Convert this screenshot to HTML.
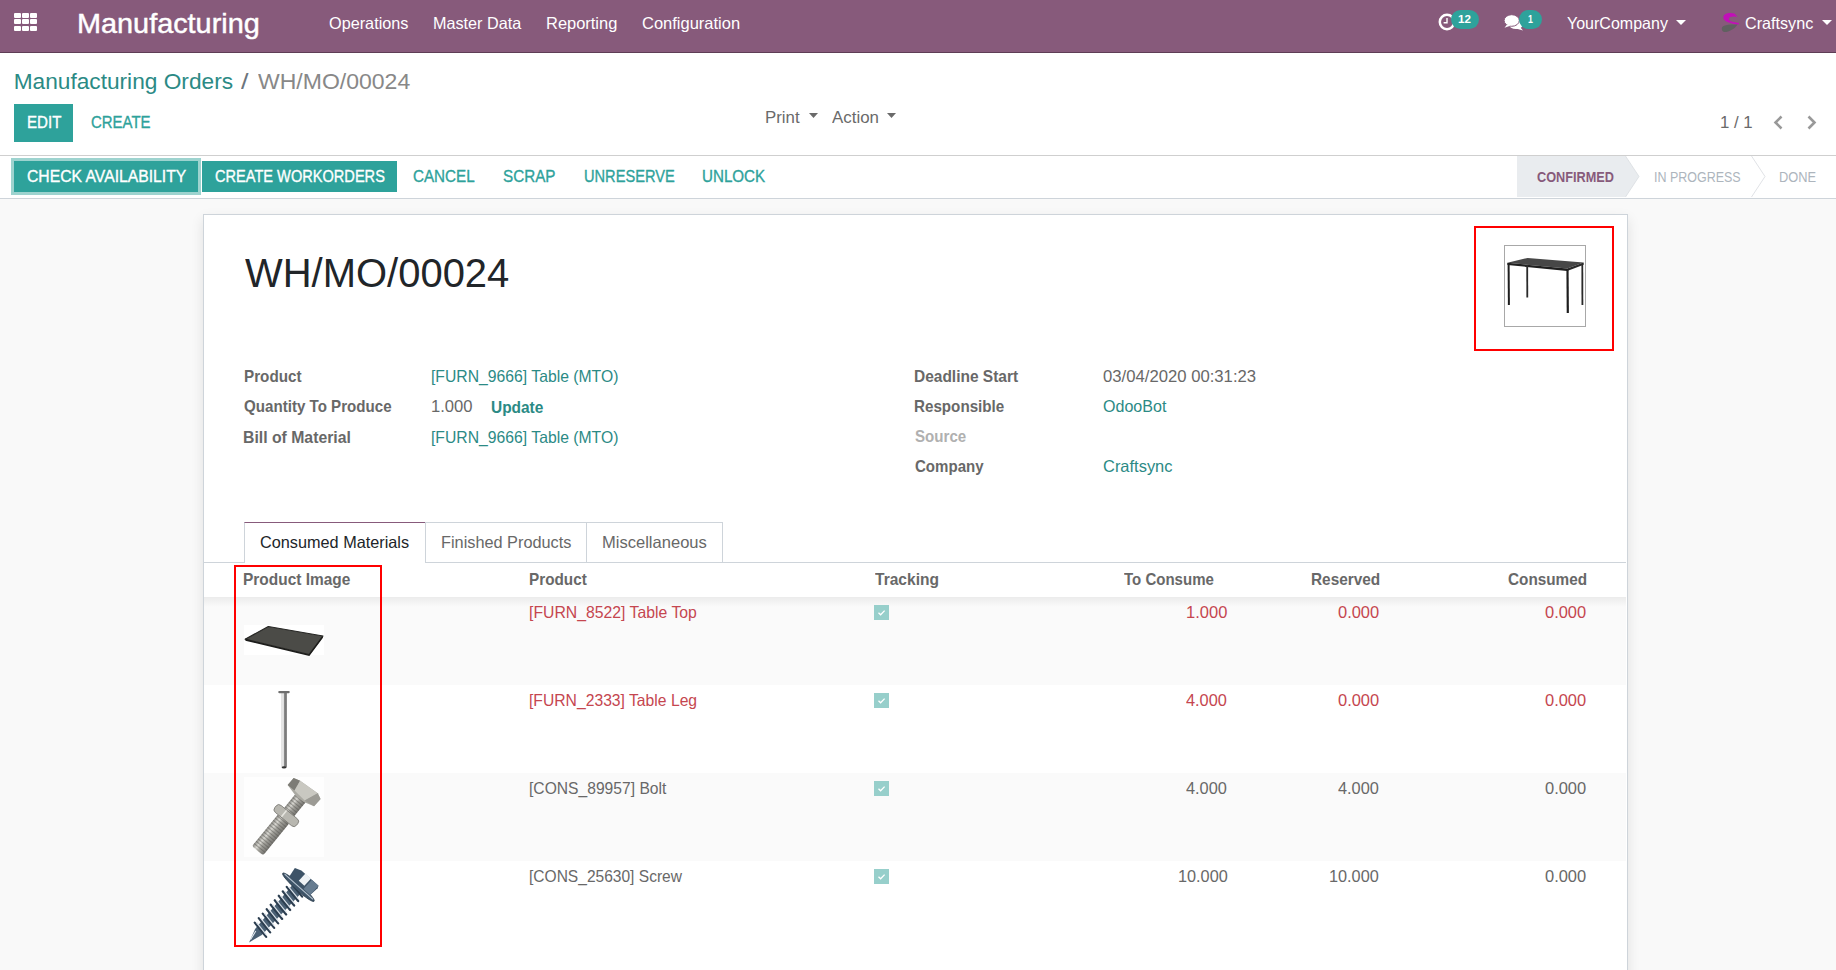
<!DOCTYPE html>
<html><head><meta charset="utf-8"><style>
html,body{margin:0;padding:0;}
body{width:1836px;height:970px;overflow:hidden;position:relative;background:#f9f9f9;font-family:"Liberation Sans",sans-serif;}
.t{position:absolute;white-space:nowrap;transform-origin:0 0;}
</style></head><body>
<div style="position:absolute;left:0px;top:0px;width:1836px;height:52px;background:#875a7b;"></div>
<div style="position:absolute;left:0px;top:52px;width:1836px;height:1px;background:#5e3d55;"></div>
<div style="position:absolute;left:14.0px;top:12.8px;width:6.6px;height:5px;background:#fff;border-radius:1px;"></div>
<div style="position:absolute;left:22.2px;top:12.8px;width:6.6px;height:5px;background:#fff;border-radius:1px;"></div>
<div style="position:absolute;left:30.4px;top:12.8px;width:6.6px;height:5px;background:#fff;border-radius:1px;"></div>
<div style="position:absolute;left:14.0px;top:19.450000000000003px;width:6.6px;height:5px;background:#fff;border-radius:1px;"></div>
<div style="position:absolute;left:22.2px;top:19.450000000000003px;width:6.6px;height:5px;background:#fff;border-radius:1px;"></div>
<div style="position:absolute;left:30.4px;top:19.450000000000003px;width:6.6px;height:5px;background:#fff;border-radius:1px;"></div>
<div style="position:absolute;left:14.0px;top:26.1px;width:6.6px;height:5px;background:#fff;border-radius:1px;"></div>
<div style="position:absolute;left:22.2px;top:26.1px;width:6.6px;height:5px;background:#fff;border-radius:1px;"></div>
<div style="position:absolute;left:30.4px;top:26.1px;width:6.6px;height:5px;background:#fff;border-radius:1px;"></div>
<div class="t" style="left:77.12px;top:5.79px;font-size:28px;line-height:35px;color:#fff;transform:scaleX(1.0299);-webkit-text-stroke:0.45px #fff;">Manufacturing</div>
<div class="t" style="left:329.13px;top:12.78px;font-size:16.5px;line-height:21px;color:#fff;transform:scaleX(0.9841);">Operations</div>
<div class="t" style="left:433.16px;top:12.78px;font-size:16.5px;line-height:21px;color:#fff;transform:scaleX(0.9817);">Master Data</div>
<div class="t" style="left:546.44px;top:12.78px;font-size:16.5px;line-height:21px;color:#fff;transform:scaleX(0.9966);">Reporting</div>
<div class="t" style="left:641.98px;top:12.78px;font-size:16.5px;line-height:21px;color:#fff;">Configuration</div>
<svg style="position:absolute;left:1436px;top:12px" width="22" height="22" viewBox="0 0 22 22"><circle cx="11" cy="10" r="7.2" fill="none" stroke="#fff" stroke-width="2.5"/><path d="M11 6 V10.8 H7.6" fill="none" stroke="#fff" stroke-width="1.4"/></svg>
<div style="position:absolute;left:1450.5px;top:10px;width:28.5px;height:19px;background:#2ea29b;border-radius:9.5px;"></div>
<div class="t" style="left:1458.28px;top:12.41px;font-size:11.8px;line-height:15px;color:#fff;font-weight:700;transform:scaleX(0.9817);">12</div>
<svg style="position:absolute;left:1502px;top:13px" width="24" height="20" viewBox="0 0 24 20"><ellipse cx="14" cy="11.5" rx="7" ry="4.6" fill="#fff"/><path d="M18 14 L21 17.5 L14 15.5 Z" fill="#fff"/><ellipse cx="9.7" cy="7.5" rx="7.6" ry="5.8" fill="#fff" stroke="#875a7b" stroke-width="1"/><path d="M5 11.5 L2.5 14.8 L9 12.5 Z" fill="#fff"/></svg>
<div style="position:absolute;left:1519.2px;top:10px;width:22.8px;height:19px;background:#2ea29b;border-radius:9.5px;"></div>
<div class="t" style="left:1527.65px;top:12.41px;font-size:11.8px;line-height:15px;color:#fff;font-weight:700;transform:scaleX(0.7472);">1</div>
<div class="t" style="left:1567.14px;top:12.78px;font-size:16.5px;line-height:21px;color:#fff;transform:scaleX(0.9707);">YourCompany</div>
<svg style="position:absolute;left:1676px;top:20px" width="10" height="5" viewBox="0 0 10 5"><path d="M0 0H10L5 5Z" fill="#fff"/></svg>
<svg style="position:absolute;left:1720px;top:12px" width="20" height="21" viewBox="0 0 20 21"><path d="M14.5 1.5 C10 0.2 4 0.8 3.3 5 C2.8 8.5 8 10.5 12 11.5 C14.5 12.2 16.5 12.6 18.8 12.4 L18.8 10.8 C15 10.5 8.5 9.5 8.8 7 C9 4.5 13.5 4.2 17.5 5 Z" fill="#c20fb8"/><path d="M17.5 12.5 C14 12.5 7 12.2 3.5 14 C1 15.3 1.2 19 4 20 C8 20.5 15 17 17.5 12.5 Z" fill="#606060"/></svg>
<div class="t" style="left:1744.59px;top:12.78px;font-size:16.5px;line-height:21px;color:#fff;transform:scaleX(0.9796);">Craftsync</div>
<svg style="position:absolute;left:1821.5px;top:20px" width="10" height="5" viewBox="0 0 10 5"><path d="M0 0H10L5 5Z" fill="#fff"/></svg>
<div style="position:absolute;left:0px;top:53px;width:1836px;height:102px;background:#fff;"></div>
<div class="t" style="left:13.63px;top:67.13px;font-size:22.7px;line-height:28px;color:#2b8a85;">Manufacturing Orders</div>
<div class="t" style="left:240.50px;top:67.13px;font-size:22.7px;line-height:28px;color:#6c757d;transform:scaleX(1.1906);">/</div>
<div class="t" style="left:258.38px;top:67.13px;font-size:22.7px;line-height:28px;color:#888;transform:scaleX(1.0143);">WH/MO/00024</div>
<div style="position:absolute;left:14px;top:104px;width:59px;height:38px;background:#2ea29b;"></div>
<div class="t" style="left:26.85px;top:111.78px;font-size:16.5px;line-height:21px;color:#fff;transform:scaleX(0.9150);-webkit-text-stroke:0.35px currentColor;">EDIT</div>
<div class="t" style="left:90.75px;top:111.78px;font-size:16.5px;line-height:21px;color:#2ea29b;transform:scaleX(0.9052);-webkit-text-stroke:0.35px currentColor;">CREATE</div>
<div class="t" style="left:764.51px;top:107.28px;font-size:16.5px;line-height:21px;color:#6a6a6a;transform:scaleX(1.0209);">Print</div>
<svg style="position:absolute;left:808.5px;top:113px" width="9" height="5" viewBox="0 0 9 5"><path d="M0 0H9L4.5 5Z" fill="#6a6a6a"/></svg>
<div class="t" style="left:831.96px;top:107.28px;font-size:16.5px;line-height:21px;color:#6a6a6a;transform:scaleX(1.0233);">Action</div>
<svg style="position:absolute;left:886.5px;top:113px" width="9" height="5" viewBox="0 0 9 5"><path d="M0 0H9L4.5 5Z" fill="#6a6a6a"/></svg>
<div class="t" style="left:1719.74px;top:112.18px;font-size:16.5px;line-height:21px;color:#6a6a6a;transform:scaleX(1.0176);">1 / 1</div>
<svg style="position:absolute;left:1772px;top:115px" width="12" height="15" viewBox="0 0 12 15"><path d="M9.5 1.5 L3.5 7.5 L9.5 13.5" fill="none" stroke="#999" stroke-width="2.6"/></svg>
<svg style="position:absolute;left:1806px;top:115px" width="12" height="15" viewBox="0 0 12 15"><path d="M2.5 1.5 L8.5 7.5 L2.5 13.5" fill="none" stroke="#999" stroke-width="2.6"/></svg>
<div style="position:absolute;left:0px;top:155px;width:1836px;height:1px;background:#cfcfcf;"></div>
<div style="position:absolute;left:0px;top:156px;width:1836px;height:42px;background:#fff;"></div>
<div style="position:absolute;left:0px;top:198px;width:1836px;height:1px;background:#ced4da;"></div>
<div style="position:absolute;left:11px;top:158px;width:190px;height:37px;background:#9dd3cf;"></div>
<div style="position:absolute;left:14px;top:161px;width:184px;height:31px;background:#2ea29b;"></div>
<div class="t" style="left:26.51px;top:165.98px;font-size:16.5px;line-height:21px;color:#fff;transform:scaleX(0.9528);-webkit-text-stroke:0.35px currentColor;">CHECK AVAILABILITY</div>
<div style="position:absolute;left:202px;top:161px;width:195px;height:31px;background:#2ea29b;"></div>
<div class="t" style="left:214.77px;top:165.98px;font-size:16.5px;line-height:21px;color:#fff;transform:scaleX(0.8838);-webkit-text-stroke:0.35px currentColor;">CREATE WORKORDERS</div>
<div class="t" style="left:413.14px;top:165.78px;font-size:16.5px;line-height:21px;color:#2ea29b;transform:scaleX(0.9215);-webkit-text-stroke:0.35px currentColor;">CANCEL</div>
<div class="t" style="left:503.31px;top:165.78px;font-size:16.5px;line-height:21px;color:#2ea29b;transform:scaleX(0.9233);-webkit-text-stroke:0.35px currentColor;">SCRAP</div>
<div class="t" style="left:583.67px;top:165.78px;font-size:16.5px;line-height:21px;color:#2ea29b;transform:scaleX(0.8854);-webkit-text-stroke:0.35px currentColor;">UNRESERVE</div>
<div class="t" style="left:702.33px;top:165.78px;font-size:16.5px;line-height:21px;color:#2ea29b;transform:scaleX(0.9186);-webkit-text-stroke:0.35px currentColor;">UNLOCK</div>
<svg style="position:absolute;left:1500px;top:156px" width="336" height="42" viewBox="0 0 336 42"><path d="M17 0 H125.5 L139 20.5 L125.5 41 H17 Z" fill="#e9ecef"/><path d="M125.5 0 L139 20.5 L125.5 41" fill="none" stroke="#d9dde1" stroke-width="0.8"/><path d="M251.5 0 L265 20.5 L251.5 41" fill="none" stroke="#dcdfe3" stroke-width="0.9"/></svg>
<div class="t" style="left:1536.59px;top:167.00px;font-size:15px;line-height:19px;color:#875a7b;font-weight:700;transform:scaleX(0.8472);">CONFIRMED</div>
<div class="t" style="left:1653.65px;top:167.00px;font-size:15px;line-height:19px;color:#adb5bd;transform:scaleX(0.8311);">IN PROGRESS</div>
<div class="t" style="left:1779.44px;top:167.00px;font-size:15px;line-height:19px;color:#adb5bd;transform:scaleX(0.8559);">DONE</div>
<div style="position:absolute;left:203px;top:214px;width:1425px;height:800px;background:#fff;border:1px solid #ced4da;box-sizing:border-box;box-shadow:0 5px 12px rgba(0,0,0,0.1);"></div>
<div class="t" style="left:245.10px;top:248.40px;font-size:39.8px;line-height:50px;color:#212529;transform:scaleX(1.0043);">WH/MO/00024</div>
<div style="position:absolute;left:1474px;top:226px;width:140px;height:125px;border:2px solid #ff0000;box-sizing:border-box;"></div>
<div style="position:absolute;left:1504px;top:245px;width:82px;height:82px;border:1px solid #a8a8a8;box-sizing:border-box;background:#fff;"></div>
<svg style="position:absolute;left:1505px;top:246px" width="80" height="80" viewBox="0 0 80 80"><path d="M2.4 16.8 L22.6 11.9 L78.7 16.5 L62.2 22.6 Z" fill="#474747"/><path d="M2.4 16.8 L62.2 22.6 L62.2 25 L2.4 19 Z" fill="#1f1f1f"/><path d="M62.2 22.6 L78.7 16.5 L78.7 18.8 L62.2 25 Z" fill="#2a2a2a"/><path d="M3.6 17 L3.9 58.9" stroke="#1e1e1e" stroke-width="2"/><path d="M22.2 19 L22.3 51.5" stroke="#2a2a2a" stroke-width="1.8"/><path d="M62.5 23 L62.8 67.1" stroke="#1e1e1e" stroke-width="2.2"/><path d="M77.3 17.5 L77.4 58.9" stroke="#2a2a2a" stroke-width="1.8"/></svg>
<div class="t" style="left:243.67px;top:365.98px;font-size:16.5px;line-height:21px;color:#686868;font-weight:700;transform:scaleX(0.9228);">Product</div>
<div class="t" style="left:243.90px;top:396.28px;font-size:16.5px;line-height:21px;color:#686868;font-weight:700;transform:scaleX(0.9165);">Quantity To Produce</div>
<div class="t" style="left:243.43px;top:426.58px;font-size:16.5px;line-height:21px;color:#686868;font-weight:700;transform:scaleX(0.9565);">Bill of Material</div>
<div class="t" style="left:431.20px;top:365.98px;font-size:16.5px;line-height:21px;color:#2b8a85;transform:scaleX(0.9536);">[FURN_9666] Table (MTO)</div>
<div class="t" style="left:431.05px;top:396.28px;font-size:16.5px;line-height:21px;color:#686868;transform:scaleX(1.0067);">1.000</div>
<div class="t" style="left:491.17px;top:396.78px;font-size:16.5px;line-height:21px;color:#2b8a85;font-weight:700;transform:scaleX(0.9362);">Update</div>
<div class="t" style="left:431.20px;top:426.58px;font-size:16.5px;line-height:21px;color:#2b8a85;transform:scaleX(0.9536);">[FURN_9666] Table (MTO)</div>
<div class="t" style="left:914.45px;top:365.78px;font-size:16.5px;line-height:21px;color:#686868;font-weight:700;transform:scaleX(0.9385);">Deadline Start</div>
<div class="t" style="left:914.48px;top:395.58px;font-size:16.5px;line-height:21px;color:#686868;font-weight:700;transform:scaleX(0.9197);">Responsible</div>
<div class="t" style="left:915.05px;top:425.78px;font-size:16.5px;line-height:21px;color:#b0b0b0;font-weight:700;transform:scaleX(0.9161);">Source</div>
<div class="t" style="left:914.90px;top:456.08px;font-size:16.5px;line-height:21px;color:#686868;font-weight:700;transform:scaleX(0.9125);">Company</div>
<div class="t" style="left:1102.83px;top:365.78px;font-size:16.5px;line-height:21px;color:#686868;transform:scaleX(1.0112);">03/04/2020 00:31:23</div>
<div class="t" style="left:1102.74px;top:395.58px;font-size:16.5px;line-height:21px;color:#2b8a85;transform:scaleX(0.9731);">OdooBot</div>
<div class="t" style="left:1102.68px;top:456.08px;font-size:16.5px;line-height:21px;color:#2b8a85;transform:scaleX(0.9972);">Craftsync</div>
<div style="position:absolute;left:204px;top:562px;width:1422px;height:1px;background:#ced4da;"></div>
<div style="position:absolute;left:244px;top:522px;width:182px;height:41px;background:#fff;border:1px solid #ced4da;border-top:1px solid #875a7b;border-bottom:none;box-sizing:border-box;"></div>
<div style="position:absolute;left:425px;top:522px;width:162px;height:40px;border:1px solid #ced4da;border-bottom:none;box-sizing:border-box;"></div>
<div style="position:absolute;left:586px;top:522px;width:137px;height:40px;border:1px solid #ced4da;border-bottom:none;box-sizing:border-box;"></div>
<div class="t" style="left:260.49px;top:532.28px;font-size:16.5px;line-height:21px;color:#212529;transform:scaleX(0.9853);">Consumed Materials</div>
<div class="t" style="left:440.66px;top:532.28px;font-size:16.5px;line-height:21px;color:#686868;transform:scaleX(0.9874);">Finished Products</div>
<div class="t" style="left:601.74px;top:532.28px;font-size:16.5px;line-height:21px;color:#686868;transform:scaleX(1.0026);">Miscellaneous</div>
<div class="t" style="left:243.46px;top:569.08px;font-size:16.5px;line-height:21px;color:#686868;font-weight:700;transform:scaleX(0.9368);">Product Image</div>
<div class="t" style="left:528.87px;top:569.08px;font-size:16.5px;line-height:21px;color:#686868;font-weight:700;transform:scaleX(0.9261);">Product</div>
<div class="t" style="left:875.04px;top:569.08px;font-size:16.5px;line-height:21px;color:#686868;font-weight:700;transform:scaleX(0.9427);">Tracking</div>
<div class="t" style="left:1124.35px;top:569.08px;font-size:16.5px;line-height:21px;color:#686868;font-weight:700;transform:scaleX(0.9105);">To Consume</div>
<div class="t" style="left:1310.76px;top:569.08px;font-size:16.5px;line-height:21px;color:#686868;font-weight:700;transform:scaleX(0.9320);">Reserved</div>
<div class="t" style="left:1507.59px;top:569.08px;font-size:16.5px;line-height:21px;color:#686868;font-weight:700;transform:scaleX(0.9278);">Consumed</div>
<div style="position:absolute;left:204px;top:597px;width:1422px;height:88px;background:#fafafa;"></div>
<div style="position:absolute;left:204px;top:597px;width:1422px;height:10px;background:linear-gradient(rgba(0,0,0,0.06),rgba(0,0,0,0));"></div>
<div class="t" style="left:528.80px;top:601.78px;font-size:16.5px;line-height:21px;color:#c5464f;transform:scaleX(0.9565);">[FURN_8522] Table Top</div>
<div style="position:absolute;left:874px;top:605px;width:15px;height:15px;background:#97cfcb;"></div>
<svg style="position:absolute;left:874px;top:605px" width="15" height="15" viewBox="0 0 15 15"><path d="M4.5 7.8 L6.6 9.8 L10.6 5.6" fill="none" stroke="#fff" stroke-width="1.3"/></svg>
<div class="t" style="left:1186.06px;top:601.78px;font-size:16.5px;line-height:21px;color:#c5464f;">1.000</div>
<div class="t" style="left:1338.04px;top:601.78px;font-size:16.5px;line-height:21px;color:#c5464f;transform:scaleX(0.9972);">0.000</div>
<div class="t" style="left:1544.74px;top:601.78px;font-size:16.5px;line-height:21px;color:#c5464f;transform:scaleX(0.9972);">0.000</div>
<div style="position:absolute;left:204px;top:685px;width:1422px;height:88px;background:#ffffff;"></div>
<div class="t" style="left:528.80px;top:689.78px;font-size:16.5px;line-height:21px;color:#c5464f;transform:scaleX(0.9511);">[FURN_2333] Table Leg</div>
<div style="position:absolute;left:874px;top:693px;width:15px;height:15px;background:#97cfcb;"></div>
<svg style="position:absolute;left:874px;top:693px" width="15" height="15" viewBox="0 0 15 15"><path d="M4.5 7.8 L6.6 9.8 L10.6 5.6" fill="none" stroke="#fff" stroke-width="1.3"/></svg>
<div class="t" style="left:1186.43px;top:689.78px;font-size:16.5px;line-height:21px;color:#c5464f;transform:scaleX(0.9900);">4.000</div>
<div class="t" style="left:1338.04px;top:689.78px;font-size:16.5px;line-height:21px;color:#c5464f;transform:scaleX(0.9972);">0.000</div>
<div class="t" style="left:1544.74px;top:689.78px;font-size:16.5px;line-height:21px;color:#c5464f;transform:scaleX(0.9972);">0.000</div>
<div style="position:absolute;left:204px;top:773px;width:1422px;height:88px;background:#fafafa;"></div>
<div class="t" style="left:528.81px;top:777.78px;font-size:16.5px;line-height:21px;color:#686868;transform:scaleX(0.9476);">[CONS_89957] Bolt</div>
<div style="position:absolute;left:874px;top:781px;width:15px;height:15px;background:#97cfcb;"></div>
<svg style="position:absolute;left:874px;top:781px" width="15" height="15" viewBox="0 0 15 15"><path d="M4.5 7.8 L6.6 9.8 L10.6 5.6" fill="none" stroke="#fff" stroke-width="1.3"/></svg>
<div class="t" style="left:1186.43px;top:777.78px;font-size:16.5px;line-height:21px;color:#686868;transform:scaleX(0.9900);">4.000</div>
<div class="t" style="left:1338.33px;top:777.78px;font-size:16.5px;line-height:21px;color:#686868;transform:scaleX(0.9900);">4.000</div>
<div class="t" style="left:1544.74px;top:777.78px;font-size:16.5px;line-height:21px;color:#686868;transform:scaleX(0.9972);">0.000</div>
<div style="position:absolute;left:204px;top:861px;width:1422px;height:88px;background:#ffffff;"></div>
<div class="t" style="left:528.81px;top:865.78px;font-size:16.5px;line-height:21px;color:#686868;transform:scaleX(0.9423);">[CONS_25630] Screw</div>
<div style="position:absolute;left:874px;top:869px;width:15px;height:15px;background:#97cfcb;"></div>
<svg style="position:absolute;left:874px;top:869px" width="15" height="15" viewBox="0 0 15 15"><path d="M4.5 7.8 L6.6 9.8 L10.6 5.6" fill="none" stroke="#fff" stroke-width="1.3"/></svg>
<div class="t" style="left:1177.58px;top:865.78px;font-size:16.5px;line-height:21px;color:#686868;transform:scaleX(0.9857);">10.000</div>
<div class="t" style="left:1329.48px;top:865.78px;font-size:16.5px;line-height:21px;color:#686868;transform:scaleX(0.9857);">10.000</div>
<div class="t" style="left:1544.74px;top:865.78px;font-size:16.5px;line-height:21px;color:#686868;transform:scaleX(0.9972);">0.000</div>
<div style="position:absolute;left:244px;top:625px;width:80px;height:30px;background:#fff;"></div>
<svg style="position:absolute;left:244px;top:601px" width="80" height="80" viewBox="0 0 80 80"><path d="M1.1 38.2 L24.3 25.5 L79 35 L65.1 53.5 Z" fill="#4b4b47" stroke="#262624" stroke-width="1.2" stroke-linejoin="round"/><path d="M1.5 39 L65.1 54.2 L78.6 36" fill="none" stroke="#1c1c1a" stroke-width="1.3"/></svg>
<svg style="position:absolute;left:244px;top:689px" width="80" height="80" viewBox="0 0 80 80"><defs><linearGradient id="rod" x1="0" x2="1"><stop offset="0" stop-color="#d0d0d0"/><stop offset="0.35" stop-color="#f4f4f4"/><stop offset="0.55" stop-color="#8a8a8a"/><stop offset="1" stop-color="#6a6a6a"/></linearGradient></defs><rect x="37.4" y="3.5" width="5.4" height="75" fill="url(#rod)"/><rect x="34.2" y="2" width="11.6" height="2.2" rx="1.1" fill="#6f6f6f"/><ellipse cx="40" cy="78.4" rx="2.3" ry="1.1" fill="#333"/></svg>
<div style="position:absolute;left:244px;top:777px;width:80px;height:80px;background:#fefefe;"></div>
<svg style="position:absolute;left:244px;top:777px" width="80" height="80" viewBox="0 0 80 80"><defs><linearGradient id="blt" x1="0" y1="0" x2="0" y2="1"><stop offset="0" stop-color="#8c8b86"/><stop offset="0.3" stop-color="#dcdbd5"/><stop offset="0.55" stop-color="#a3a29c"/><stop offset="1" stop-color="#74736e"/></linearGradient><pattern id="thr" width="3" height="40" patternUnits="userSpaceOnUse"><rect x="0" width="1.1" height="40" fill="#55544f" fill-opacity="0.5"/></pattern></defs><g transform="translate(13.5 73.8) rotate(-50.7)"><rect x="0" y="-7.2" width="42" height="14.4" rx="2.5" fill="url(#blt)"/><rect x="1" y="-7.2" width="41" height="14.4" fill="url(#thr)"/><rect x="49" y="-6.5" width="19" height="13" fill="url(#blt)"/><rect x="49" y="-6.5" width="19" height="13" fill="url(#thr)"/><rect x="41" y="-14" width="9" height="28" rx="3.5" fill="#b8b7b0" stroke="#7a7973" stroke-width="0.8"/><path d="M41.5 -3 L49.5 -3" stroke="#e6e5df" stroke-width="1.5"/><path d="M70.1 -18.4 L79.3 -18.2 L81.2 -11.4 L82.7 10.1 L80.1 15.9 L70.3 15.5 L67 5 L67 -6 Z" fill="#aaa9a2"/><path d="M70.1 -18.4 L79.3 -18.2 L81.2 -11.4 L70.2 -9.6 Z" fill="#7d7c76"/><path d="M70.2 -9.6 L81.2 -11.4 L82.7 10.1 L68.8 4.7 Z" fill="#c9c8c1"/><path d="M68.8 4.7 L82.7 10.1 L80.1 15.9 L70.3 15.5 Z" fill="#9c9b95"/></g></svg>
<svg style="position:absolute;left:244px;top:865px" width="80" height="80" viewBox="0 0 80 80"><g transform="translate(5.1 77.4) rotate(-48.2)"><path d="M0 0 L14 -4.5 L73 -6 L73 6 L14 4.5 Z" fill="#4a6074"/><path d="M18.5 -9 L15.5 9 M24.5 -9 L21.5 9 M30.5 -9 L27.5 9 M36.5 -9 L33.5 9 M42.5 -9 L39.5 9 M48.5 -9 L45.5 9 M54.5 -9 L51.5 9 M60.5 -9 L57.5 9 M66.5 -9 L63.5 9 M72.5 -9 L69.5 9" stroke="#2c3e50" stroke-width="2.2" stroke-linecap="round"/><path d="M19.8 -7.5 L17.3 7.5 M25.8 -7.5 L23.3 7.5 M31.8 -7.5 L29.3 7.5 M37.8 -7.5 L35.3 7.5 M43.8 -7.5 L41.3 7.5 M49.8 -7.5 L47.3 7.5 M55.8 -7.5 L53.3 7.5 M61.8 -7.5 L59.3 7.5 M67.8 -7.5 L65.3 7.5 M73.8 -7.5 L71.3 7.5" stroke="#d5dde5" stroke-width="1.2"/><path d="M3 -0.8 L13 -2.6" stroke="#e6ecf1" stroke-width="1"/><ellipse cx="74" cy="0" rx="3.2" ry="21" fill="#3f5569" stroke="#2a3b4c" stroke-width="0.8"/><path d="M74.6 -19 L74.6 19" stroke="#b9c6d2" stroke-width="1.1"/><path d="M76 -14 L86 -15.5 L88.5 -9 L88.5 14 L86 15 L76 14 Z" fill="#3d5367"/><path d="M79 -4 L89 -4 L89 3.5 L79 3.5 Z" fill="#eef2f5"/><path d="M76 5 L88.5 5 L88.5 14 L76 14 Z" fill="#667c90"/></g></svg>
<div style="position:absolute;left:234px;top:565px;width:148px;height:382px;border:2px solid #ff0000;box-sizing:border-box;"></div>
</body></html>
